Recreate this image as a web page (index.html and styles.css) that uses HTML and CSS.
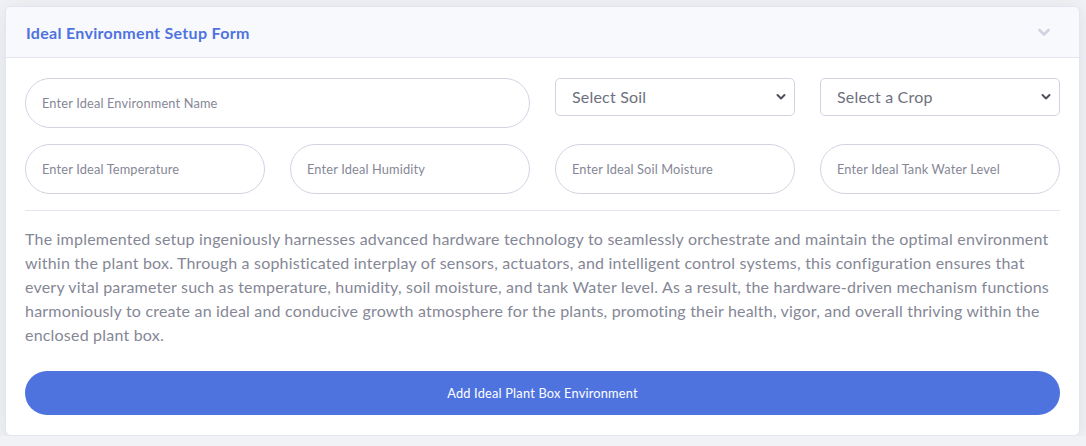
FILE: index.html
```html
<!DOCTYPE html>
<html>
<head>
<meta charset="utf-8">
<link rel="stylesheet" href="styles.css">
</head>
<body>
<div class="card">
  <div class="card-header">
    <h6 class="card-title">Ideal Environment Setup Form</h6>
    <svg class="chevron" width="12" height="9" viewBox="0 0 12 9"><path d="M1.5 2 L6 6.5 L10.5 2" fill="none" stroke="#d1d3e2" stroke-width="2.6" stroke-linecap="round" stroke-linejoin="round"/></svg>
  </div>
  <div class="card-body">
    <div class="grid">
      <div class="pill wide">Enter Ideal Environment Name</div>
      <div class="select"><span>Select Soil</span><svg width="10" height="8" viewBox="0 0 10 8"><path d="M1.5 2 L5 5.5 L8.5 2" fill="none" stroke="#4d4f5c" stroke-width="2" stroke-linecap="round" stroke-linejoin="round"/></svg></div>
      <div class="select"><span>Select a Crop</span><svg width="10" height="8" viewBox="0 0 10 8"><path d="M1.5 2 L5 5.5 L8.5 2" fill="none" stroke="#4d4f5c" stroke-width="2" stroke-linecap="round" stroke-linejoin="round"/></svg></div>
      <div class="pill">Enter Ideal Temperature</div>
      <div class="pill">Enter Ideal Humidity</div>
      <div class="pill">Enter Ideal Soil Moisture</div>
      <div class="pill">Enter Ideal Tank Water Level</div>
    </div>
    <hr class="divider">
    <p class="desc">The implemented setup ingeniously harnesses advanced hardware technology to seamlessly orchestrate and maintain the optimal environment within the plant box. Through a sophisticated interplay of sensors, actuators, and intelligent control systems, this configuration ensures that every vital parameter such as temperature, humidity, soil moisture, and tank Water level. As a result, the hardware-driven mechanism functions harmoniously to create an ideal and conducive growth atmosphere for the plants, promoting their health, vigor, and overall thriving within the enclosed plant box.</p>
    <div class="btn">Add Ideal Plant Box Environment</div>
  </div>
</div>
</body>
</html>
```
FILE: styles.css
```css
* { box-sizing: border-box; }
html, body { margin: 0; padding: 0; }
body {
  background: #f1f2f6;
  font-family: Lato, "Noto Sans", sans-serif;
  color: #858796;
  padding: 6px 6px 0 5px;
  letter-spacing: 0.2px;
}
.card {
  background: #fff;
  border: 1px solid #e3e6f0;
  border-radius: 6px;
  box-shadow: 0 2px 20px rgba(58, 59, 69, 0.10);
  width: 1075px;
  overflow: hidden;
}
.card-header {
  background: #f8f9fc;
  border-bottom: 1px solid #e3e6f0;
  height: 51px;
  display: flex;
  align-items: center;
  justify-content: space-between;
  padding: 0 29px 0 20px;
}
.card-title {
  margin: 0;
  color: #4e73df;
  font-size: 16px;
  font-weight: 700;
  letter-spacing: 0.3px;
}
.chevron { display: block; margin-top: 1px; }
.card-body { padding: 20px 19px 20px 19px; }
.grid {
  display: grid;
  grid-template-columns: repeat(4, 240px);
  column-gap: 25px;
  row-gap: 16px;
  align-items: start;
}
.pill {
  height: 50px;
  border: 1px solid #d1d3e2;
  border-radius: 25px;
  display: flex;
  align-items: center;
  padding: 0 16px;
  font-size: 12.8px;
  color: #858796;
  letter-spacing: 0.15px;
}
.wide { grid-column: span 2; }
.select {
  height: 38px;
  border: 1px solid #d1d3e2;
  border-radius: 5px;
  display: flex;
  align-items: center;
  justify-content: space-between;
  padding: 0 8px 1px 16px;
  font-size: 16px;
  color: #6e707e;
}
.divider {
  border: 0;
  border-top: 1px solid #e3e6f0;
  margin: 16px 0 16px 0;
}
.desc {
  margin: 0 0 24px 0;
  font-size: 16px;
  line-height: 24px;
  color: #858796;
}
.btn {
  height: 44px;
  background: #4e73df;
  border-radius: 22px;
  color: #fff;
  font-size: 12.8px;
  display: flex;
  align-items: center;
  justify-content: center;
}
```
